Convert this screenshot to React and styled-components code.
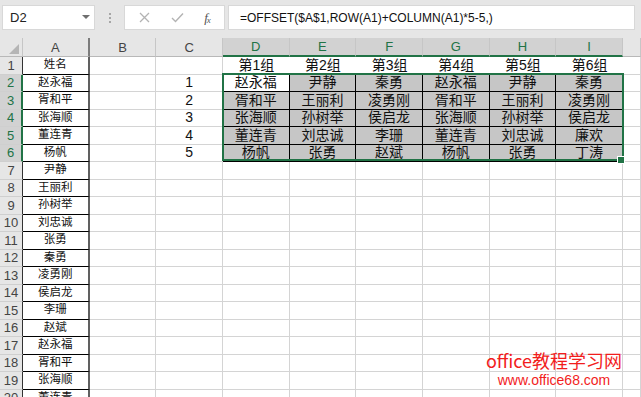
import styled, { createGlobalStyle, css } from 'styled-components';

const ROW_H = 17.5;
const COL_W = 200 / 3;
const HEAD_W = 23;
const HEAD_H = 19;
const GREEN = '#217346';

const GlobalStyle = createGlobalStyle`
  html, body {
    margin: 0;
    padding: 0;
    background: #ffffff;
    overflow: hidden;
  }
  body {
    font-family: "Liberation Sans", "Noto Sans CJK SC", sans-serif;
    color: #000;
  }
`;

const Page = styled.div`
  position: relative;
  width: 641px;
  height: 397px;
  overflow: hidden;
  background: #fff;
`;

// ---------- formula bar ----------
const Toolbar = styled.div`
  display: flex;
  align-items: flex-start;
  height: 38px;
  box-sizing: border-box;
  padding: 5px 6px 0 2px;
  background: #e6e6e6;
`;

const NameBox = styled.div`
  display: flex;
  align-items: center;
  justify-content: space-between;
  width: 93px;
  height: 25px;
  box-sizing: border-box;
  padding: 0 4px 0 7px;
  background: #fff;
  border: 1px solid #d8d8d8;
  font-size: 13px;
  color: #222;
`;

const Caret = styled.span`
  width: 0;
  height: 0;
  border-left: 4px solid transparent;
  border-right: 4px solid transparent;
  border-top: 4px solid #6f6f6f;
  margin-bottom: 2px;
`;

const Dots = styled.div`
  display: flex;
  flex-direction: column;
  align-items: center;
  justify-content: center;
  gap: 2px;
  width: 29px;
  height: 25px;
  span {
    width: 2px;
    height: 2px;
    background: #a6a6a6;
  }
`;

const ButtonGroup = styled.div`
  display: flex;
  align-items: center;
  justify-content: space-around;
  width: 101px;
  height: 25px;
  box-sizing: border-box;
  padding: 0 4px;
  background: #fff;
  border: 1px solid #d8d8d8;
`;

const FxMark = styled.span`
  font-family: "Liberation Serif", serif;
  font-style: italic;
  font-size: 13px;
  color: #555;
  letter-spacing: -1px;
  sub {
    font-size: 9px;
    vertical-align: -1px;
  }
`;

const FormulaInput = styled.div`
  flex: 1;
  height: 25px;
  margin-left: 3px;
  box-sizing: border-box;
  padding-left: 11px;
  display: flex;
  align-items: center;
  background: #fff;
  border: 1px solid #d8d8d8;
  font-size: 12px;
  color: #111;
`;

// ---------- sheet ----------
const Sheet = styled.div`
  position: relative;
`;

const Row = styled.div`
  display: flex;
  height: ${p => (p.$head ? HEAD_H : ROW_H)}px;
  line-height: 1;
`;

const Corner = styled.div`
  flex: 0 0 ${HEAD_W}px;
  box-sizing: border-box;
  display: flex;
  align-items: flex-end;
  justify-content: flex-end;
  padding: 0 3px 2px 0;
  background: #e6e6e6;
  border-right: 1px solid #c6c6c6;
  border-bottom: 1px solid #b8b8b8;
`;

const ColHead = styled.div`
  flex: 0 0 ${COL_W}px;
  box-sizing: border-box;
  display: flex;
  align-items: center;
  justify-content: center;
  font-size: 13px;
  color: #444;
  background: #e6e6e6;
  border-right: 1px solid #c6c6c6;
  border-bottom: 1px solid #b8b8b8;
  ${p => p.$freeze && css`border-right: 2px solid #7c7c7c;`}
  ${p => p.$hl && css`
    background: #d2d2d2;
    color: ${GREEN};
    border-bottom: 2px solid ${GREEN};
  `}
`;

const ColHeadRest = styled(ColHead)`
  flex: 1;
`;

const RowHead = styled.div`
  flex: 0 0 ${HEAD_W}px;
  box-sizing: border-box;
  display: flex;
  align-items: center;
  justify-content: center;
  font-size: 13px;
  color: #444;
  background: #e6e6e6;
  border-bottom: 1px solid #cfcfcf;
  border-right: 1px solid #333;
  ${p => p.$hl && css`
    background: #d2d2d2;
    color: ${GREEN};
    border-right: 2px solid ${GREEN};
  `}
`;

const kinds = {
  plain: css`
    border-right: 1px solid #d4d4d4;
    border-bottom: 1px solid #d4d4d4;
    font-size: 14px;
  `,
  name: css`
    border-right: 2px solid #606060;
    border-bottom: 1px solid #000;
    font-size: 11.5px;
  `,
  title: css`
    border-bottom: 1px solid #d4d4d4;
    font-size: 14px;
  `,
  group: css`
    background: #c6c6c6;
    border-right: 1px solid #000;
    border-bottom: 1px solid #000;
    font-size: 14px;
  `,
};

const Cell = styled.div`
  flex: 0 0 ${COL_W}px;
  box-sizing: border-box;
  display: flex;
  align-items: center;
  justify-content: center;
  padding-bottom: 1px;
  white-space: nowrap;
  overflow: hidden;
  color: #111;
  background: #fff;
  ${p => kinds[p.$kind || 'plain']}
  ${p => p.$active && css`background: #fff;`}
`;

const RestCell = styled(Cell)`
  flex: 1;
`;

const Selection = styled.div`
  position: absolute;
  left: ${HEAD_W + 3 * COL_W - 1}px;
  top: ${HEAD_H + ROW_H - 1.5}px;
  width: ${6 * COL_W + 2}px;
  height: ${5 * ROW_H + 0.5}px;
  box-sizing: border-box;
  border: 2px solid ${GREEN};
  pointer-events: none;
`;

const FillHandle = styled.div`
  position: absolute;
  right: -3px;
  bottom: -5px;
  width: 6px;
  height: 6px;
  background: ${GREEN};
  border: 1px solid #fff;
`;

const Watermark = styled.div`
  position: absolute;
  left: 470px;
  top: 348px;
  width: 168px;
  display: flex;
  flex-direction: column;
  align-items: center;
  color: #f21d1d;
  pointer-events: none;
`;

const MarkTitle = styled.div`
  font-family: "Noto Sans CJK SC", sans-serif;
  font-size: 18px;
  line-height: 24px;
`;

const MarkUrl = styled.div`
  font-family: "Liberation Sans", sans-serif;
  font-size: 14px;
  line-height: 16px;
`;

const names = [
  '赵永福', '胥和平', '张海顺', '董连青', '杨帆', '尹静', '王丽利', '孙树举', '刘忠诚', '张勇',
  '秦勇', '凌勇刚', '侯启龙', '李珊', '赵斌', '赵永福', '胥和平', '张海顺', '董连青',
];

const groups = [
  ['赵永福', '尹静', '秦勇', '赵永福', '尹静', '秦勇'],
  ['胥和平', '王丽利', '凌勇刚', '胥和平', '王丽利', '凌勇刚'],
  ['张海顺', '孙树举', '侯启龙', '张海顺', '孙树举', '侯启龙'],
  ['董连青', '刘忠诚', '李珊', '董连青', '刘忠诚', '廉欢'],
  ['杨帆', '张勇', '赵斌', '杨帆', '张勇', '丁涛'],
];

const letters = ['A', 'B', 'C', 'D', 'E', 'F', 'G', 'H', 'I'];

const CrossIcon = () => (
  <svg width="11" height="11" viewBox="0 0 11 11">
    <path d="M1 1 L10 10 M10 1 L1 10" stroke="#b3b3b3" strokeWidth="1.3" fill="none" />
  </svg>
);

const CheckIcon = () => (
  <svg width="13" height="11" viewBox="0 0 13 11">
    <path d="M1 6 L4.5 9.5 L12 1.5" stroke="#b3b3b3" strokeWidth="1.4" fill="none" />
  </svg>
);

const CornerMark = () => (
  <svg width="10" height="10" viewBox="0 0 10 10">
    <polygon points="10,0 10,10 0,10" fill="#b5b5b5" />
  </svg>
);

function SheetRow({ n }) {
  const hl = n >= 2 && n <= 6;
  const name = n === 1 ? '姓名' : names[n - 2];
  let rest;
  if (n === 1) {
    rest = ['第1组', '第2组', '第3组', '第4组', '第5组', '第6组'].map(t => (
      <Cell key={t} $kind="title">{t}</Cell>
    ));
  } else if (hl) {
    rest = groups[n - 2].map((t, i) => (
      <Cell key={i} $kind="group" $active={n === 2 && i === 0}>{t}</Cell>
    ));
  } else {
    rest = [0, 1, 2, 3, 4, 5].map(i => <Cell key={i} />);
  }
  return (
    <Row>
      <RowHead $hl={hl}>{n}</RowHead>
      <Cell $kind="name">{name}</Cell>
      <Cell />
      <Cell>{hl ? n - 1 : ''}</Cell>
      {rest}
      <RestCell />
    </Row>
  );
}

export default function App() {
  const rows = Array.from({ length: 20 }, (_, i) => i + 1);
  return (
    <Page>
      <GlobalStyle />
      <Toolbar>
        <NameBox>
          D2
          <Caret />
        </NameBox>
        <Dots>
          <span />
          <span />
          <span />
        </Dots>
        <ButtonGroup>
          <CrossIcon />
          <CheckIcon />
          <FxMark>f<sub>x</sub></FxMark>
        </ButtonGroup>
        <FormulaInput>=OFFSET($A$1,ROW(A1)+COLUMN(A1)*5-5,)</FormulaInput>
      </Toolbar>
      <Sheet>
        <Row $head>
          <Corner>
            <CornerMark />
          </Corner>
          {letters.map((l, i) => (
            <ColHead key={l} $freeze={i === 0} $hl={i >= 3}>{l}</ColHead>
          ))}
          <ColHeadRest />
        </Row>
        {rows.map(n => (
          <SheetRow key={n} n={n} />
        ))}
        <Selection>
          <FillHandle />
        </Selection>
      </Sheet>
      <Watermark>
        <MarkTitle>office教程学习网</MarkTitle>
        <MarkUrl>www.office68.com</MarkUrl>
      </Watermark>
    </Page>
  );
}
